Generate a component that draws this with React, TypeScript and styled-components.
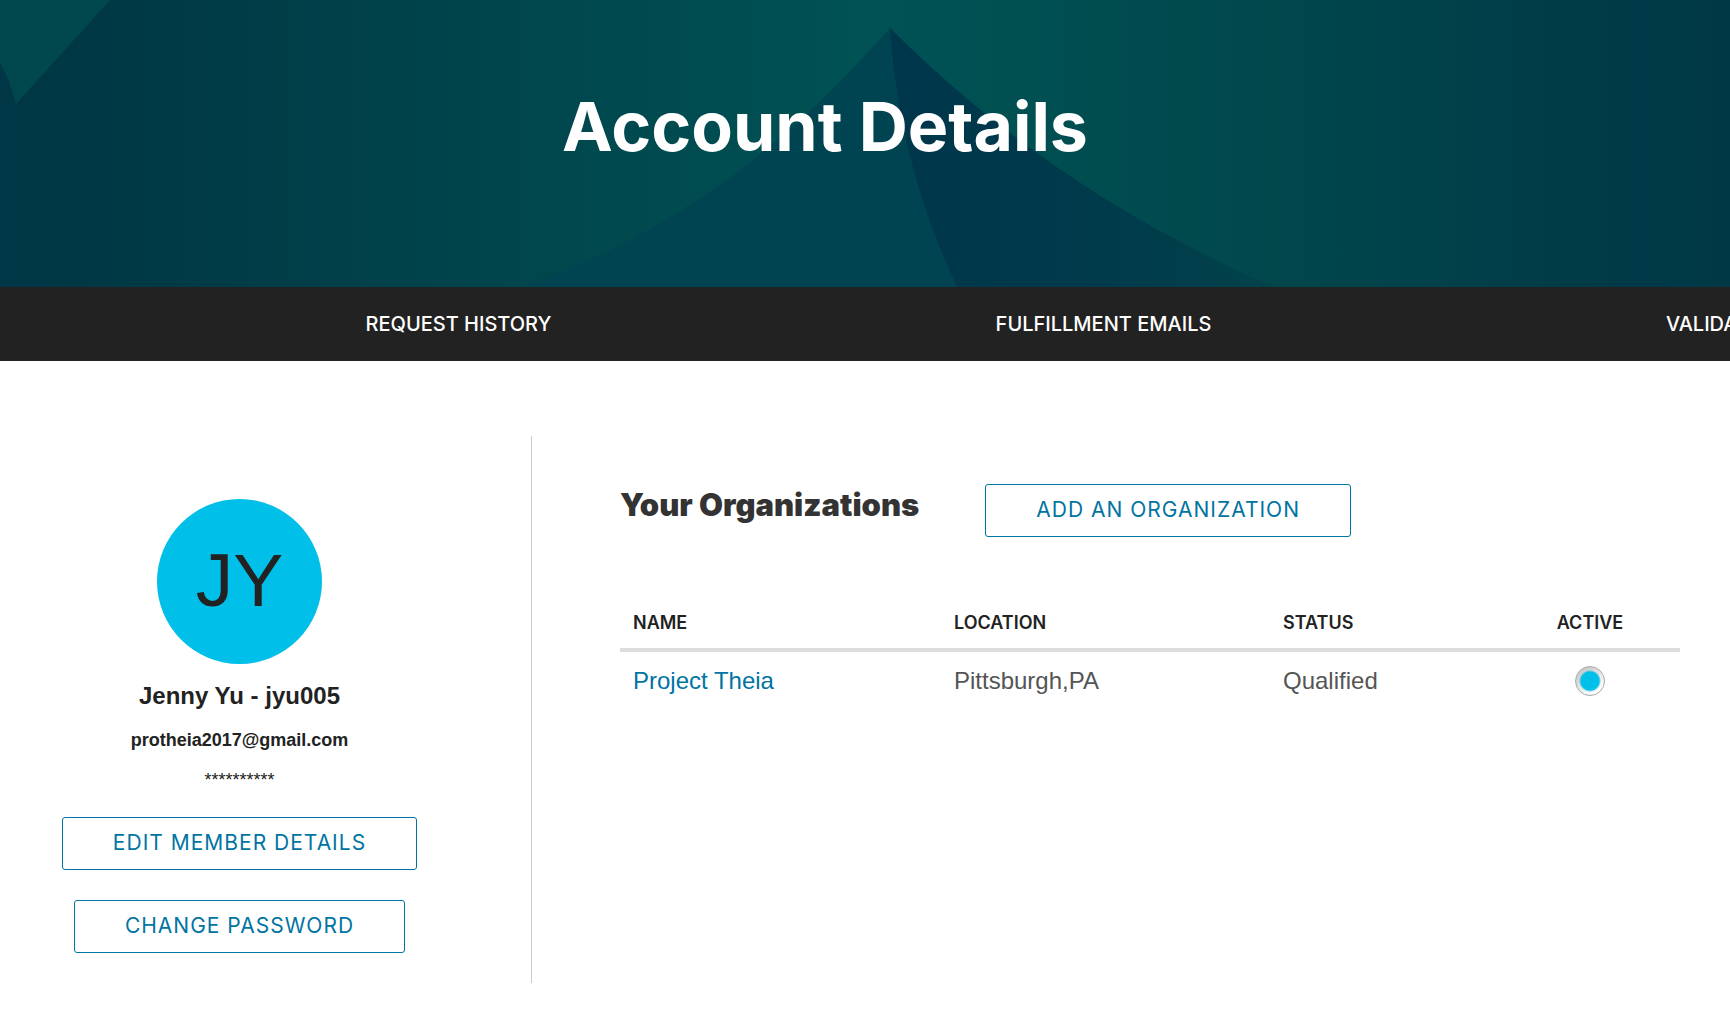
import React from "react";
import styled, { createGlobalStyle } from "styled-components";

const GlobalStyle = createGlobalStyle`
  * { box-sizing: border-box; }
  body {
    margin: 0;
    background: #fff;
    color: #222;
    font-family: "Liberation Sans", Arial, sans-serif;
    overflow-x: hidden;
  }
  h1, h2, p { margin: 0; }
`;

const brandFont = `Inter, "Liberation Sans", sans-serif`;

const Hero = styled.header`
  position: relative;
  height: 287px;
  padding: 84px 80px 0 0;
  text-align: center;
  background: #004a50;
`;

const HeroArt = styled.svg`
  position: absolute;
  inset: 0;
  width: 100%;
  height: 100%;
`;

const Title = styled.h1`
  position: relative;
  color: #fff;
  font: 700 68px/84px ${brandFont};
`;

const Nav = styled.nav`
  display: flex;
  height: 74px;
  padding-left: 136px;
  background: #222;
  overflow: hidden;
`;

const NavLink = styled.a`
  flex: 0 0 645px;
  color: #fff;
  font: 500 20px/74px ${brandFont};
  text-align: center;
  text-decoration: none;
`;

const Content = styled.main`
  display: grid;
  grid-template-columns: 532px 1fr;
  padding: 75px 50px 40px 0;
`;

const Profile = styled.section`
  display: flex;
  flex-direction: column;
  align-items: center;
  padding: 63px 52px 30px 0;
  border-right: 1px solid #ccc;
`;

const Avatar = styled.div`
  width: 165px;
  height: 165px;
  border-radius: 50%;
  background: #00bfe8;
  font-size: 75px;
  line-height: 162px;
  text-align: center;
`;

const MemberName = styled.h2`
  margin-top: 16px;
  font-size: 24px;
  line-height: 32px;
`;

const Detail = styled.p<{ $strong?: boolean }>`
  margin-top: 16px;
  font-size: 18px;
  font-weight: ${(p) => (p.$strong ? 700 : 400)};
  line-height: 24px;
`;

const Actions = styled.div`
  display: flex;
  flex-direction: column;
  align-items: center;
  gap: 30px;
  margin-top: 25px;
`;

const OutlineButton = styled.button`
  height: 53px;
  padding: 0 50px 2px;
  border: 1px solid #0074a2;
  border-radius: 3px;
  background: #fff;
  color: #0074a2;
  font: 400 21px/24px ${brandFont};
  letter-spacing: 1px;
  white-space: nowrap;
  cursor: pointer;
`;

const Organizations = styled.section`
  padding: 48px 0 0 88px;
`;

const SectionHead = styled.div`
  display: flex;
  gap: 66px;
`;

const SectionTitle = styled.h2`
  color: #333;
  font: 900 31px/42px ${brandFont};
`;

const OrgTable = styled.table`
  width: 100%;
  margin-top: 58px;
  border-collapse: collapse;
  table-layout: fixed;
`;

const Col = styled.col<{ $w?: string }>`
  width: ${(p) => p.$w ?? "auto"};
`;

const HeadCell = styled.th<{ $center?: boolean }>`
  height: 55px;
  padding: 2px 13px 0;
  border-bottom: 4px solid #ddd;
  font: 600 18px/24px ${brandFont};
  text-align: ${(p) => (p.$center ? "center" : "left")};
`;

const Cell = styled.td<{ $center?: boolean }>`
  height: 58px;
  padding: 2px 13px 0;
  color: #555;
  font-size: 24px;
  line-height: 30px;
  text-align: ${(p) => (p.$center ? "center" : "left")};
`;

const OrgLink = styled.a`
  color: #0074a2;
  text-decoration: none;
`;

const Radio = styled.input`
  appearance: none;
  display: block;
  width: 30px;
  height: 30px;
  margin: 0 auto;
  border: 1px solid #aaa;
  border-radius: 50%;
  background: radial-gradient(circle, #00bfe8 9px, transparent 11px),
    linear-gradient(145deg, #bdbdbd, #fff 80%);
`;

const navItems = ["REQUEST HISTORY", "FULFILLMENT EMAILS", "VALIDATION LOG"];

const organizations = [
  { name: "Project Theia", location: "Pittsburgh,PA", status: "Qualified", active: true },
];

function SailArt() {
  return (
    <HeroArt viewBox="0 0 1730 287" preserveAspectRatio="none" aria-hidden="true">
      <defs>
        <linearGradient id="sky">
          <stop offset="0" stopColor="#003645" />
          <stop offset="0.08" stopColor="#003946" />
          <stop offset="0.3" stopColor="#00464c" />
          <stop offset="0.5" stopColor="#005254" />
          <stop offset="0.58" stopColor="#005052" />
          <stop offset="0.77" stopColor="#00454b" />
          <stop offset="0.86" stopColor="#003f49" />
          <stop offset="0.95" stopColor="#003947" />
          <stop offset="1" stopColor="#003846" />
        </linearGradient>
        <linearGradient id="shade">
          <stop offset="0" stopColor="#00364b" />
          <stop offset="0.5" stopColor="#003a4b" />
          <stop offset="1" stopColor="#00424b" />
        </linearGradient>
      </defs>
      <rect width="1730" height="287" fill="url(#sky)" />
      <path d="M0 0H110L16 104Q9 78 0 63Z" fill="#00484d" />
      <path d="M890 28C790 142 675 234 521 287H957C915 198 895 110 890 28Z" fill="#004451" />
      <path d="M890 28C985 122 1100 210 1273 287H957C915 198 895 110 890 28Z" fill="url(#shade)" />
    </HeroArt>
  );
}

export default function App() {
  return (
    <>
      <GlobalStyle />
      <Hero>
        <SailArt />
        <Title>Account Details</Title>
      </Hero>
      <Nav>
        {navItems.map((item) => (
          <NavLink key={item} href="#">{item}</NavLink>
        ))}
      </Nav>
      <Content>
        <Profile>
          <Avatar>JY</Avatar>
          <MemberName>Jenny Yu - jyu005</MemberName>
          <Detail $strong>protheia2017@gmail.com</Detail>
          <Detail>**********</Detail>
          <Actions>
            <OutlineButton>EDIT MEMBER DETAILS</OutlineButton>
            <OutlineButton>CHANGE PASSWORD</OutlineButton>
          </Actions>
        </Profile>
        <Organizations>
          <SectionHead>
            <SectionTitle>Your Organizations</SectionTitle>
            <OutlineButton>ADD AN ORGANIZATION</OutlineButton>
          </SectionHead>
          <OrgTable>
            <colgroup>
              <Col $w="321px" />
              <Col $w="329px" />
              <Col />
              <Col $w="180px" />
            </colgroup>
            <thead>
              <tr>
                <HeadCell scope="col">NAME</HeadCell>
                <HeadCell scope="col">LOCATION</HeadCell>
                <HeadCell scope="col">STATUS</HeadCell>
                <HeadCell scope="col" $center>ACTIVE</HeadCell>
              </tr>
            </thead>
            <tbody>
              {organizations.map((org) => (
                <tr key={org.name}>
                  <Cell><OrgLink href="#">{org.name}</OrgLink></Cell>
                  <Cell>{org.location}</Cell>
                  <Cell>{org.status}</Cell>
                  <Cell $center>
                    <Radio type="radio" name="active-org" aria-label={org.name} defaultChecked={org.active} />
                  </Cell>
                </tr>
              ))}
            </tbody>
          </OrgTable>
        </Organizations>
      </Content>
    </>
  );
}
